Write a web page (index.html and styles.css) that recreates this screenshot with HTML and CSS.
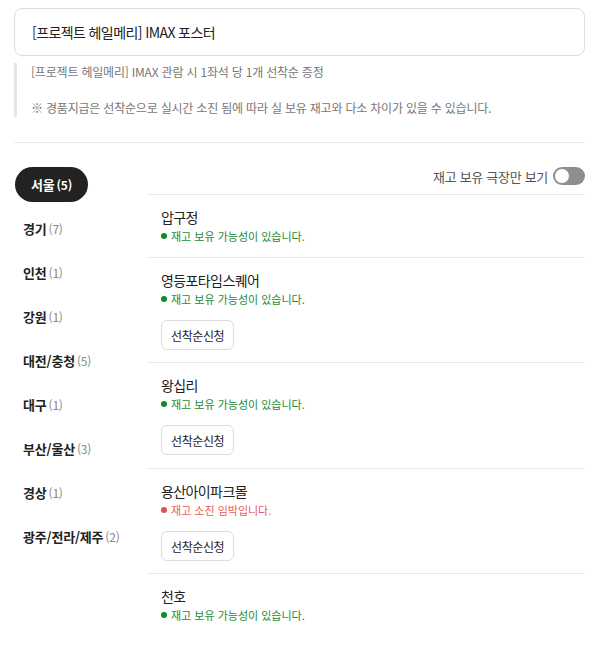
FILE: index.html
```html
<!DOCTYPE html>
<html lang="ko">
<head>
<meta charset="utf-8">
<title>IMAX 포스터</title>
<link rel="stylesheet" href="styles.css">
</head>
<body>
<div class="page">
  <div class="title-box">[프로젝트 헤일메리] IMAX 포스터</div>
  <div class="notice">
    <p>[프로젝트 헤일메리] IMAX 관람 시 1좌석 당 1개 선착순 증정</p>
    <p>&nbsp;</p>
    <p>※ 경품지급은 선착순으로 실시간 소진 됨에 따라 실 보유 재고와 다소 차이가 있을 수 있습니다.</p>
  </div>
  <hr class="divider">
  <div class="main">
    <ul class="regions">
      <li class="region active"><b>서울</b><span class="cnt">(5)</span></li>
      <li class="region"><b>경기</b><span class="cnt">(7)</span></li>
      <li class="region"><b>인천</b><span class="cnt">(1)</span></li>
      <li class="region"><b>강원</b><span class="cnt">(1)</span></li>
      <li class="region"><b>대전/충청</b><span class="cnt">(5)</span></li>
      <li class="region"><b>대구</b><span class="cnt">(1)</span></li>
      <li class="region"><b>부산/울산</b><span class="cnt">(3)</span></li>
      <li class="region"><b>경상</b><span class="cnt">(1)</span></li>
      <li class="region"><b>광주/전라/제주</b><span class="cnt">(2)</span></li>
    </ul>
    <div class="theaters">
      <div class="filter">
        <span class="filter-label">재고 보유 극장만 보기</span>
        <span class="toggle"><span class="knob"></span></span>
      </div>
      <div class="theater">
        <div class="name">압구정</div>
        <div class="status ok">재고 보유 가능성이 있습니다.</div>
      </div>
      <div class="theater">
        <div class="name">영등포타임스퀘어</div>
        <div class="status ok">재고 보유 가능성이 있습니다.</div>
        <button class="apply">선착순신청</button>
      </div>
      <div class="theater">
        <div class="name">왕십리</div>
        <div class="status ok">재고 보유 가능성이 있습니다.</div>
        <button class="apply">선착순신청</button>
      </div>
      <div class="theater">
        <div class="name">용산아이파크몰</div>
        <div class="status low">재고 소진 임박입니다.</div>
        <button class="apply">선착순신청</button>
      </div>
      <div class="theater">
        <div class="name">천호</div>
        <div class="status ok">재고 보유 가능성이 있습니다.</div>
      </div>
    </div>
  </div>
</div>
</body>
</html>
```

FILE: styles.css
```css
* { box-sizing: border-box; }
html, body { margin: 0; padding: 0; background: #fff; }
body {
  font-family: "Noto Sans CJK KR", "Noto Sans", sans-serif;
  color: #222;
}
.page {
  width: 571px;
  margin-left: 14px;
  padding-top: 8px;
}
.title-box {
  height: 48px;
  border: 1px solid #dedede;
  border-radius: 8px;
  padding-left: 17px;
  display: flex;
  align-items: center;
  font-size: 14px;
  color: #222;
  letter-spacing: -0.6px;
}
.notice {
  margin-top: 7px;
  border-left: 3px solid #e6e6e6;
  padding-left: 14px;
  font-size: 12px;
  line-height: 18px;
  color: #777;
  letter-spacing: -0.2px;
}
.notice p { margin: 0; }
.divider {
  margin: 25px 0 0;
  border: 0;
  border-top: 1px solid #ececec;
  height: 0;
}
.main {
  display: flex;
  padding-top: 24px;
}
.regions {
  list-style: none;
  margin: 0;
  padding: 0;
  width: 133px;
  display: flex;
  flex-direction: column;
  gap: 9px;
}
.region {
  height: 35px;
  display: flex;
  align-items: center;
  padding-left: 9px;
  font-size: 13px;
  color: #222;
  letter-spacing: -0.2px;
}
.region b { font-weight: 700; }
.region .cnt {
  font-size: 12px;
  color: #888;
  margin-left: 2px;
}
.region.active {
  align-self: flex-start;
  background: #222;
  color: #fff;
  border-radius: 18px;
  padding: 0 16px;
  margin-left: 1px;
}
.region.active .cnt { color: #fff; font-weight: 700; }
.theaters {
  flex: 1;
}
.filter {
  height: 18px;
  display: flex;
  align-items: center;
  justify-content: flex-end;
  gap: 5px;
  margin-bottom: 9px;
}
.filter-label {
  font-size: 13px;
  color: #555;
  letter-spacing: -0.3px;
}
.toggle {
  width: 32px;
  height: 18px;
  border-radius: 9px;
  background: #8e8e8e;
  position: relative;
}
.knob {
  position: absolute;
  left: 1px;
  top: 1px;
  width: 16px;
  height: 16px;
  border-radius: 50%;
  background: #fff;
  border: 1px solid #8e8e8e;
}
.theater {
  border-top: 1px solid #e8e8e8;
  padding: 12px 14px;
  display: flex;
  flex-direction: column;
  align-items: flex-start;
}
.theater:nth-child(4) { padding-bottom: 13px; }
.name {
  font-size: 14px;
  line-height: 20px;
  color: #222;
  letter-spacing: -0.6px;
}
.status {
  font-size: 11px;
  line-height: 18px;
  display: flex;
  align-items: center;
  letter-spacing: 0;
}
.status::before {
  content: "";
  width: 6px;
  height: 6px;
  border-radius: 50%;
  margin-right: 4px;
}
.status.ok { color: #1b8a36; }
.status.ok::before { background: #128a2a; }
.status.low { color: #ec5a5a; }
.status.low::before { background: #ec4c4c; }
.apply {
  margin-top: 12px;
  height: 30px;
  padding: 0 9px;
  border: 1px solid #dcdcdc;
  border-radius: 6px;
  background: #fff;
  font-family: inherit;
  font-size: 12px;
  color: #222;
  letter-spacing: -0.4px;
}
```
